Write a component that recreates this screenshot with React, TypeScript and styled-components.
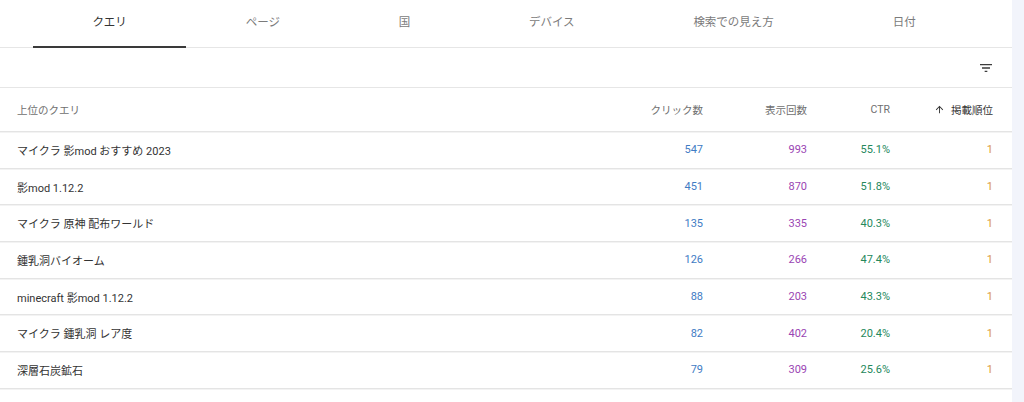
import React from 'react'
import styled, { createGlobalStyle } from 'styled-components'

const GlobalStyle = createGlobalStyle`
  html, body {
    margin: 0;
    padding: 0;
    background: #f2f4fb;
    overflow: hidden;
  }
  body {
    font-family: Roboto, "Noto Sans CJK JP", "Noto Sans", sans-serif;
    -webkit-font-smoothing: antialiased;
  }
`

const Page = styled.div`
  width: 1024px;
  height: 402px;
  overflow: hidden;
  background: #f2f4fb;
`

const Panel = styled.div`
  width: 1012px;
  height: 402px;
  background: #ffffff;
  overflow: hidden;
`

const TabBar = styled.div`
  display: flex;
  height: 47px;
  padding: 0 37px 0 33px;
  border-bottom: 1px solid #e6e6e6;
`

const Tab = styled.div<{ $active?: boolean }>`
  flex: 1 1 auto;
  display: flex;
  align-items: center;
  justify-content: center;
  padding-bottom: 4px;
  font-size: 11.5px;
  color: ${({ $active }) => ($active ? '#333333' : '#7b7b7b')};
  border-bottom: 2px solid ${({ $active }) => ($active ? '#3a3a3a' : 'transparent')};
  margin-bottom: -1px;
`

const FilterBar = styled.div`
  display: flex;
  justify-content: flex-end;
  align-items: center;
  height: 39px;
  padding-right: 18px;
  border-bottom: 1px solid #e6e6e6;
`

const Row = styled.div<{ $head?: boolean }>`
  display: grid;
  grid-template-columns: 1fr 104px 104px 83px 103px;
  align-items: center;
  height: ${({ $head }) => ($head ? '43px' : '35.7px')};
  padding: 0 19px 0 17px;
  border-bottom: 1px solid #e4e4e4;
  box-shadow: 0 1px 0 #f3f3f3;
`

const HeadCell = styled.div<{ $left?: boolean }>`
  font-size: 10.5px;
  color: #6f6f6f;
  text-align: ${({ $left }) => ($left ? 'left' : 'right')};
  display: flex;
  align-items: center;
  justify-content: ${({ $left }) => ($left ? 'flex-start' : 'flex-end')};
  gap: 6px;
`

const SortedHead = styled(HeadCell)`
  color: #333333;
`

const Query = styled.div`
  font-size: 11px;
  color: #333333;
  white-space: nowrap;
`

const Num = styled.div<{ $color: string }>`
  font-size: 11px;
  text-align: right;
  color: ${({ $color }) => $color};
`

const FilterIcon = () => (
  <svg width="16" height="16" viewBox="0 0 24 24" fill="#3c3c3c">
    <path d="M10 18h4v-2h-4v2zM3 6v2h18V6H3zm3 7h12v-2H6v2z" />
  </svg>
)

const ArrowUp = () => (
  <svg width="11" height="11" viewBox="0 0 24 24" fill="#333333">
    <path d="M4 12l1.41 1.41L11 7.83V20h2V7.83l5.58 5.59L20 12l-8-8-8 8z" />
  </svg>
)

const tabs = ['クエリ', 'ページ', '国', 'デバイス', '検索での見え方', '日付']

const rows = [
  { q: 'マイクラ 影mod おすすめ 2023', c: 547, i: 993, ctr: '55.1%', p: 1 },
  { q: '影mod 1.12.2', c: 451, i: 870, ctr: '51.8%', p: 1 },
  { q: 'マイクラ 原神 配布ワールド', c: 135, i: 335, ctr: '40.3%', p: 1 },
  { q: '鍾乳洞バイオーム', c: 126, i: 266, ctr: '47.4%', p: 1 },
  { q: 'minecraft 影mod 1.12.2', c: 88, i: 203, ctr: '43.3%', p: 1 },
  { q: 'マイクラ 鍾乳洞 レア度', c: 82, i: 402, ctr: '20.4%', p: 1 },
  { q: '深層石炭鉱石', c: 79, i: 309, ctr: '25.6%', p: 1 },
  { q: 'minecraft 1.12 影mod', c: 77, i: 290, ctr: '26.6%', p: 1 },
]

const colors = {
  clicks: '#3f7cc4',
  impressions: '#9a45b3',
  ctr: '#25885c',
  position: '#dc9a3e',
}

export default function App() {
  return (
    <Page>
      <GlobalStyle />
      <Panel>
        <TabBar>
          {tabs.map((t, i) => (
            <Tab key={t} $active={i === 0}>
              {t}
            </Tab>
          ))}
        </TabBar>
        <FilterBar>
          <FilterIcon />
        </FilterBar>
        <Row $head>
          <HeadCell $left>上位のクエリ</HeadCell>
          <HeadCell>クリック数</HeadCell>
          <HeadCell>表示回数</HeadCell>
          <HeadCell>CTR</HeadCell>
          <SortedHead>
            <ArrowUp />
            掲載順位
          </SortedHead>
        </Row>
        {rows.map((r) => (
          <Row key={r.q}>
            <Query>{r.q}</Query>
            <Num $color={colors.clicks}>{r.c}</Num>
            <Num $color={colors.impressions}>{r.i}</Num>
            <Num $color={colors.ctr}>{r.ctr}</Num>
            <Num $color={colors.position}>{r.p}</Num>
          </Row>
        ))}
      </Panel>
    </Page>
  )
}
